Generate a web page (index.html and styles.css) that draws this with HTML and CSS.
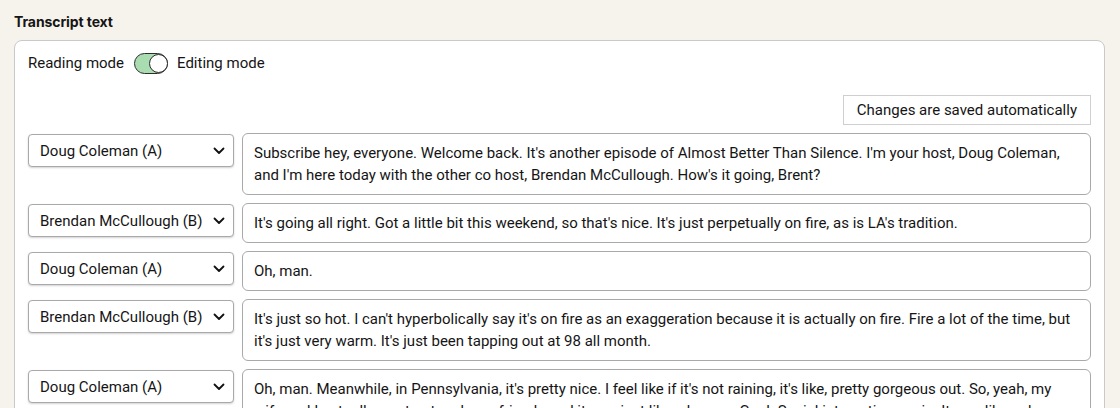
FILE: index.html
```html
<!DOCTYPE html>
<html lang="en">
<head>
<meta charset="utf-8">
<title>Transcript text</title>
<link rel="stylesheet" href="styles.css">
</head>
<body>
<h2 class="title">Transcript text</h2>
<section class="panel">
  <div class="mode-row">
    <span>Reading mode</span>
    <span class="toggle"><span class="knob"></span></span>
    <span>Editing mode</span>
  </div>
  <div class="saved-row">
    <div class="saved">Changes are saved automatically</div>
  </div>
  <div class="rows">
    <div class="row">
      <div class="speaker"><span>Doug Coleman (A)</span><svg class="chev" viewBox="0 0 12 8" width="12" height="8"><path d="M1.5 1.5 L6 6 L10.5 1.5" fill="none" stroke="#111" stroke-width="1.8" stroke-linecap="round" stroke-linejoin="round"/></svg></div>
      <div class="text">Subscribe hey, everyone. Welcome back. It's another episode of Almost Better Than Silence. I'm your host, Doug Coleman, and I'm here today with the other co host, Brendan McCullough. How's it going, Brent?</div>
    </div>
    <div class="row">
      <div class="speaker"><span>Brendan McCullough (B)</span><svg class="chev" viewBox="0 0 12 8" width="12" height="8"><path d="M1.5 1.5 L6 6 L10.5 1.5" fill="none" stroke="#111" stroke-width="1.8" stroke-linecap="round" stroke-linejoin="round"/></svg></div>
      <div class="text">It's going all right. Got a little bit this weekend, so that's nice. It's just perpetually on fire, as is LA's tradition.</div>
    </div>
    <div class="row">
      <div class="speaker"><span>Doug Coleman (A)</span><svg class="chev" viewBox="0 0 12 8" width="12" height="8"><path d="M1.5 1.5 L6 6 L10.5 1.5" fill="none" stroke="#111" stroke-width="1.8" stroke-linecap="round" stroke-linejoin="round"/></svg></div>
      <div class="text">Oh, man.</div>
    </div>
    <div class="row">
      <div class="speaker"><span>Brendan McCullough (B)</span><svg class="chev" viewBox="0 0 12 8" width="12" height="8"><path d="M1.5 1.5 L6 6 L10.5 1.5" fill="none" stroke="#111" stroke-width="1.8" stroke-linecap="round" stroke-linejoin="round"/></svg></div>
      <div class="text">It's just so hot. I can't hyperbolically say it's on fire as an exaggeration because it is actually on fire. Fire a lot of the time, but it's just very warm. It's just been tapping out at 98 all month.</div>
    </div>
    <div class="row">
      <div class="speaker"><span>Doug Coleman (A)</span><svg class="chev" viewBox="0 0 12 8" width="12" height="8"><path d="M1.5 1.5 L6 6 L10.5 1.5" fill="none" stroke="#111" stroke-width="1.8" stroke-linecap="round" stroke-linejoin="round"/></svg></div>
      <div class="text">Oh, man. Meanwhile, in Pennsylvania, it's pretty nice. I feel like if it's not raining, it's like, pretty gorgeous out. So, yeah, my wife and I actually went out and saw friends and it was just like, oh, wow. Cool. Social interaction again. It was like a dream. But it was also kind of strange to be back out there after so long.</div>
    </div>
  </div>
</section>
</body>
</html>
```

FILE: styles.css
```css
* { box-sizing: border-box; }

html, body {
  margin: 0;
  background: #f6f3ec;
}

body {
  padding: 12px 15px 0 14px;
  font-family: Roboto, "Liberation Sans", Arial, sans-serif;
  color: #151515;
  font-size: 15px;
}

.title {
  margin: 0 0 8px 0;
  font-size: 14px;
  line-height: 20px;
  font-weight: 700;
  font-family: Inter, Roboto, sans-serif;
  letter-spacing: -0.1px;
}

.panel {
  background: #fff;
  border: 1px solid #c9c9c9;
  border-radius: 8px;
  padding: 11px 13px 20px 13px;
}

.mode-row {
  display: flex;
  align-items: center;
  gap: 9px;
  height: 22px;
  line-height: 22px;
}

.toggle {
  width: 34px;
  height: 21px;
  margin-left: 1px;
  border-radius: 11px;
  background: #a9dcb1;
  border: 1.5px solid #2d2d2d;
  display: flex;
  align-items: center;
  justify-content: flex-end;
}

.knob {
  width: 19px;
  height: 19px;
  border-radius: 50%;
  background: #fff;
  border: 1.5px solid #2d2d2d;
  margin-right: -1px;
}

.saved-row {
  display: flex;
  justify-content: flex-end;
  margin-top: 21px;
}

.saved {
  border: 1px solid #cfcfcf;
  height: 30px;
  line-height: 28px;
  padding: 0 13px;
}

.rows {
  display: flex;
  flex-direction: column;
  gap: 8px;
  margin-top: 8px;
}

.row {
  display: flex;
  align-items: flex-start;
  gap: 8px;
}

.speaker {
  flex: 0 0 206px;
  width: 206px;
  min-width: 0;
  overflow: hidden;
  height: 33px;
  margin-top: 1px;
  border: 1px solid #a9a9a9;
  border-radius: 4px;
  box-shadow: 0 1px 2px rgba(0, 0, 0, 0.18);
  display: flex;
  align-items: center;
  justify-content: space-between;
  padding: 0 8px 0 11px;
  white-space: nowrap;
  background: #fff;
}

.chev { display: block; flex: 0 0 auto; margin-top: 1px; }

.text {
  flex: 1 1 auto;
  min-width: 0;
  border: 1px solid #a9a9a9;
  border-radius: 6px;
  padding: 8px 11px;
  line-height: 22px;
  min-height: 40px;
}
```
